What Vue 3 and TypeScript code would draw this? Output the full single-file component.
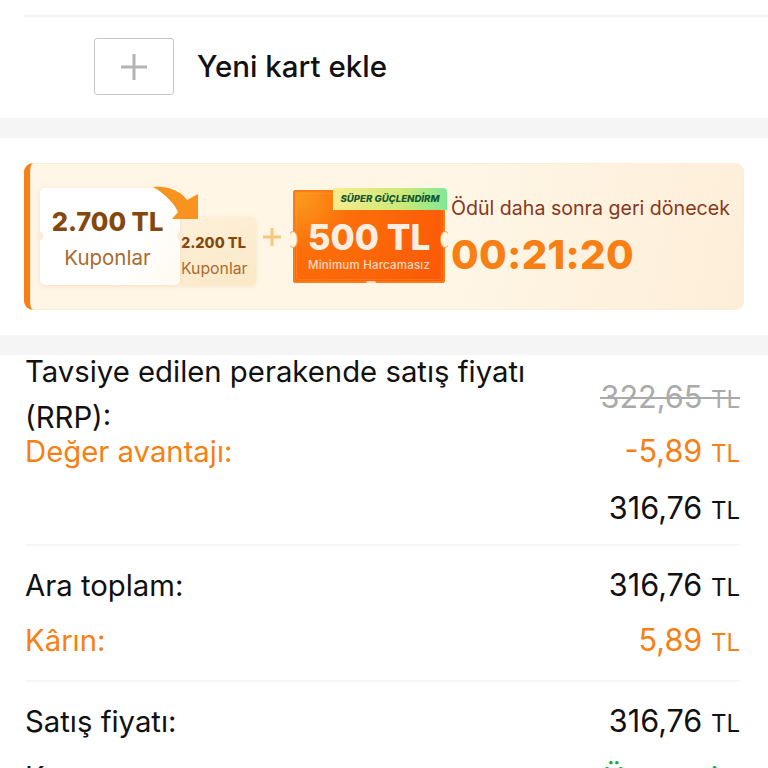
<script setup lang="ts">
interface PriceRow {
  label?: string
  amount: string
  tone?: 'accent' | 'muted'
}

const topRows: PriceRow[] = [
  { label: 'Tavsiye edilen perakende satış fiyatı (RRP):', amount: '322,65', tone: 'muted' },
  { label: 'Değer avantajı:', amount: '-5,89', tone: 'accent' },
  { amount: '316,76' }
]

const midRows: PriceRow[] = [
  { label: 'Ara toplam:', amount: '316,76' },
  { label: 'Kârın:', amount: '5,89', tone: 'accent' }
]
</script>

<template>
  <div class="page">
    <section class="card-section">
      <div class="card-line"></div>
      <div class="add-row">
        <div class="add-box">
          <svg width="30" height="30" viewBox="0 0 30 30">
            <path d="M15 2v26M2 15h26" stroke="#b4b4b4" stroke-width="3" fill="none" />
          </svg>
        </div>
        <span class="add-text">Yeni kart ekle</span>
      </div>
    </section>

    <section class="promo-section">
      <div class="promo">
        <div class="coupons">
          <div class="coupon-big">
            <b>2.700 TL</b>
            <span>Kuponlar</span>
          </div>
          <div class="coupon-small">
            <b>2.200 TL</b>
            <span>Kuponlar</span>
          </div>
          <svg class="arrow" width="46" height="34" viewBox="0 0 46 34">
            <path d="M0 1C12 0 26 3 34 14L45 8V33H19L25 26C22 19 14 9 0 1Z" fill="#f7931e" />
          </svg>
        </div>
        <svg class="plus" width="22" height="22" viewBox="0 0 22 22">
          <path d="M11 2v18M2 11h18" stroke="#f9c77c" stroke-width="3" fill="none" />
        </svg>
        <div class="ticket">
          <div class="ticket-rim"></div>
          <div class="ticket-glow"></div>
          <div class="ticket-tag">SÜPER GÜÇLENDİRM</div>
          <div class="ticket-value">500 TL</div>
          <div class="ticket-note">Minimum Harcamasız</div>
        </div>
        <div class="reward">
          <div class="reward-text">Ödül daha sonra geri dönecek</div>
          <div class="timer">00:21:20</div>
        </div>
      </div>
    </section>

    <section class="prices">
      <div class="price-group first">
        <div v-for="row in topRows" :key="row.amount" class="price-row" :class="row.tone">
          <span class="price-label">{{ row.label }}</span>
          <span class="price-amount">{{ row.amount }} <small>TL</small></span>
        </div>
      </div>
      <div class="price-group mid">
        <div v-for="row in midRows" :key="row.amount" class="price-row" :class="row.tone">
          <span class="price-label">{{ row.label }}</span>
          <span class="price-amount">{{ row.amount }} <small>TL</small></span>
        </div>
      </div>
      <div class="price-group last">
        <div class="price-row">
          <span class="price-label">Satış fiyatı:</span>
          <span class="price-amount">316,76 <small>TL</small></span>
        </div>
        <div class="price-row shipping">
          <span class="price-label">Kargo:</span>
          <span class="price-amount free">Ücretsiz</span>
        </div>
      </div>
    </section>
  </div>
</template>

<style scoped>
.page {
  width: 768px;
  height: 768px;
  overflow: hidden;
  background: #f5f5f5;
  font-family: Inter, "Noto Sans", "Liberation Sans", sans-serif;
  color: #111;
}

.card-section {
  height: 118px;
  background: #fff;
  padding: 15px 0 0 24px;
  box-sizing: border-box;
}

.card-line {
  height: 2px;
  background: #f1f1f1;
}

.add-row {
  display: flex;
  align-items: center;
  gap: 23px;
  margin: 21px 0 0 70px;
}

.add-box {
  width: 80px;
  height: 57px;
  box-sizing: border-box;
  border: 1px solid #c6c6c6;
  border-radius: 3px;
  display: flex;
  align-items: center;
  justify-content: center;
}

.add-text {
  font-size: 29.5px;
  font-weight: 500;
  line-height: 57px;
}

.promo-section {
  height: 197px;
  margin-top: 20px;
  box-sizing: border-box;
  padding: 25px 24px 0;
  background: #fff;
}

.promo {
  height: 147px;
  box-sizing: border-box;
  display: flex;
  align-items: center;
  padding: 0 0 4px 10px;
  border-radius: 9px;
  border-left: 6px solid #f77f13;
  background: linear-gradient(100deg, #fff6e7 0%, #fff6e5 60%, #fdeed8 100%);
  box-shadow: inset 0 0 0 1px #fbedd6;
}

.coupons {
  position: relative;
  display: flex;
  align-items: flex-end;
  width: 216px;
  margin-top: 4px;
}

.arrow {
  position: absolute;
  left: 113px;
  top: -2px;
}

.coupon-big {
  position: relative;
  width: 140px;
  height: 97px;
  border-radius: 5px;
  background: linear-gradient(120deg, #fff 65%, #fffaf0);
  box-shadow: 0 1px 5px #f4dfc0;
  display: flex;
  flex-direction: column;
  align-items: center;
  padding: 18px 5px 0 0;
  box-sizing: border-box;
}

.coupon-big::before,
.coupon-big::after {
  content: "";
  position: absolute;
  top: 44px;
  width: 6px;
  height: 8px;
  border-radius: 50%;
  background: #fdecd2;
}

.coupon-big::before {
  left: -3px;
}

.coupon-big::after {
  right: -3px;
}

.coupon-big b {
  font-size: 25.5px;
  font-weight: 800;
  line-height: 31px;
  color: #84480f;
  white-space: nowrap;
}

.coupon-big span {
  margin-top: 8px;
  font-size: 20.5px;
  line-height: 25px;
  color: #a96b30;
}

.coupon-small {
  width: 76px;
  height: 68px;
  background: linear-gradient(160deg, #fdf1da, #fbe8c6);
  border-radius: 0 4px 4px 0;
  box-shadow: 0 1px 4px #f6e2c4;
  display: flex;
  flex-direction: column;
  padding: 17px 0 0 1px;
  box-sizing: border-box;
}

.coupon-small b {
  font-size: 14.5px;
  font-weight: 800;
  line-height: 18px;
  color: #84480f;
  white-space: nowrap;
}

.coupon-small span {
  margin-top: 7px;
  font-size: 15.8px;
  line-height: 20px;
  color: #a96b30;
}

.plus {
  margin: 4px 10px 0 5px;
  flex: none;
}

.ticket {
  position: relative;
  width: 152px;
  height: 93px;
  flex: none;
  margin-top: 3px;
  box-sizing: border-box;
  border-radius: 3px;
  background: radial-gradient(circle at 4% 8%, #fb9a1c 0%, #fb6f0a 30%, #fb5806 100%);
  box-shadow: inset 0 0 0 2px #f97c16;
  text-align: center;
  color: #fff;
  padding-top: 27px;
}

.ticket::before,
.ticket::after {
  content: "";
  position: absolute;
  top: 41px;
  width: 10px;
  height: 17px;
  box-sizing: border-box;
  border: 1px solid #fba35c;
  border-radius: 50%;
  background: #fff5e3;
}

.ticket::before {
  left: -5px;
  border-left-color: transparent;
}

.ticket::after {
  right: -5px;
  border-right-color: transparent;
}

.ticket-rim {
  position: absolute;
  inset: 3px;
  border: 1px solid rgba(255, 160, 80, 0.3);
  border-radius: 2px;
}

.ticket-glow {
  position: absolute;
  left: 48%;
  bottom: 0;
  width: 10px;
  height: 2px;
  border-radius: 3px 3px 0 0;
  background: #fcd6ae;
}

.ticket-tag {
  position: absolute;
  top: -2px;
  right: -2px;
  width: 114px;
  height: 22px;
  line-height: 22px;
  border-radius: 0 4px 0 0;
  background: linear-gradient(95deg, #f8ec90 0%, #cbe978 62%, #7fe896 100%);
  color: #14572f;
  font-size: 9.6px;
  font-weight: 800;
  font-style: italic;
  white-space: nowrap;
}

.ticket-value {
  position: relative;
  font-size: 35px;
  font-weight: 800;
  line-height: 40px;
  color: #fdeee2;
  white-space: nowrap;
}

.ticket-note {
  position: relative;
  font-size: 11.5px;
  font-weight: 500;
  color: #fcd9c2;
  margin-top: 1px;
  white-space: nowrap;
  letter-spacing: 0.2px;
}

.reward {
  margin-left: 6px;
  white-space: nowrap;
  padding-top: 4px;
}

.reward-text {
  font-size: 19.6px;
  color: #86391c;
  line-height: 24px;
}

.timer {
  font-size: 40px;
  font-weight: 800;
  color: #f77f13;
  line-height: 46px;
  margin-top: 12px;
  letter-spacing: 0.4px;
}

.prices {
  margin-top: 20px;
  background: #fff;
  height: 413px;
  overflow: hidden;
  padding: 0 28px 0 25px;
  font-size: 29.3px;
}

.price-group {
  border-bottom: 2px solid #f6f6f6;
}

.price-group.first {
  height: 197px;
  margin-top: -6px;
  box-sizing: border-box;
}

.first .price-row:nth-child(2) {
  margin-top: -13px;
}

.first .price-row:nth-child(3) {
  margin-top: 10px;
}

.price-group.mid {
  height: 136px;
  padding-top: 16px;
  box-sizing: border-box;
}

.price-group.last {
  border-bottom: 0;
  padding-top: 16px;
}

.price-row {
  display: flex;
  justify-content: space-between;
  align-items: baseline;
  line-height: 46px;
  min-height: 46px;
}

.mid .price-row + .price-row {
  margin-top: 8px;
}

.last .price-row.shipping {
  margin-top: 10px;
}

.price-label {
  width: 510px;
}

.price-amount {
  font-size: 30.6px;
  white-space: nowrap;
}

.price-amount small {
  font-size: 24px;
  line-height: 1;
}

.accent {
  color: #f77f13;
}

.muted {
  align-items: center;
}

.muted .price-amount {
  position: relative;
  color: #aaa;
  margin-top: 4px;
}

.muted .price-amount::after {
  content: "";
  position: absolute;
  left: -1px;
  right: 0;
  top: 23px;
  height: 2px;
  background: #aaa;
}

.price-amount.free {
  color: #1fa83c;
  font-size: 29px;
  letter-spacing: 3px;
}
</style>
